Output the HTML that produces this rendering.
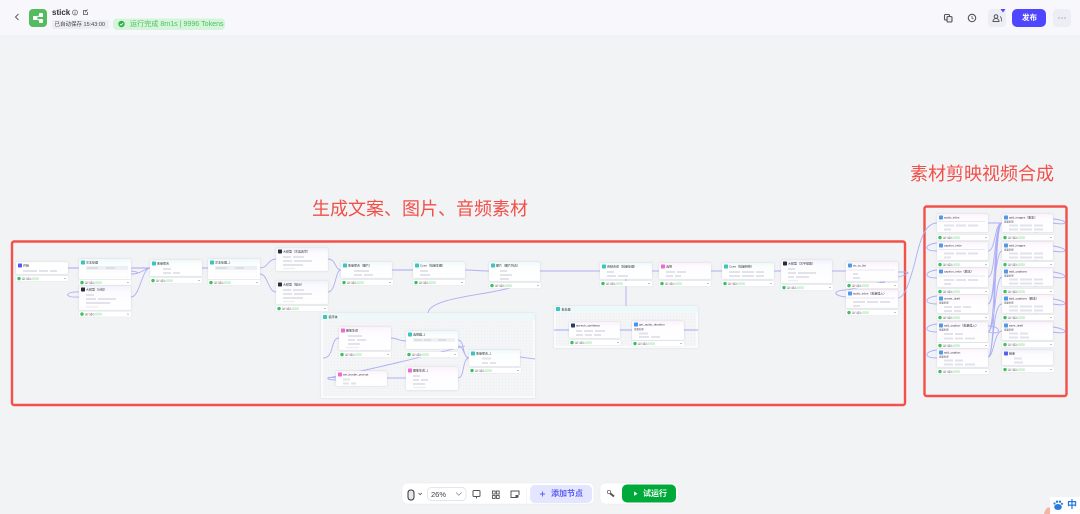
<!DOCTYPE html>
<html lang="zh"><head><meta charset="utf-8"><title>stick</title>
<style>
html,body{margin:0;padding:0;width:1080px;height:514px;overflow:hidden;background:#f2f3f5;font-family:"Liberation Sans","Noto Sans CJK SC",sans-serif}
svg{position:absolute;left:0;top:0}
.a{position:absolute;white-space:nowrap}
.lbl{color:#f14f49;font-size:18px;line-height:24px;font-family:"Liberation Sans","Noto Sans CJK SC",sans-serif;font-weight:400}
.n{stroke:#eceef2;stroke-width:.3;filter:drop-shadow(0 .5px 1px rgba(20,20,60,.13))}
.p{stroke:#e2e3ea;stroke-width:1.900;fill:none}
.e{stroke:#aeaef6;stroke-width:.9;fill:none}
.t{font-size:3px;fill:#333;font-family:"Liberation Sans","Noto Sans CJK SC",sans-serif}
.s{font-size:2.400px;fill:#555;font-family:"Liberation Sans","Noto Sans CJK SC",sans-serif}
</style></head><body>
<svg width="1080" height="514" viewBox="0 0 1080 514" xmlns="http://www.w3.org/2000/svg">
<defs>
<linearGradient id="gt" x1="0" y1="0" x2="0" y2="1"><stop offset="0" stop-color="#eefbfa"/><stop offset=".3" stop-color="#fcfefe"/><stop offset="1" stop-color="#fff"/></linearGradient>
<linearGradient id="gp" x1="0" y1="0" x2="0" y2="1"><stop offset="0" stop-color="#fdf3fb"/><stop offset=".3" stop-color="#fefcff"/><stop offset="1" stop-color="#fff"/></linearGradient>
<linearGradient id="gb" x1="0" y1="0" x2="0" y2="1"><stop offset="0" stop-color="#f3f3fe"/><stop offset=".3" stop-color="#fcfcff"/><stop offset="1" stop-color="#fff"/></linearGradient>
<linearGradient id="gg" x1="0" y1="0" x2="0" y2="1"><stop offset="0" stop-color="#ecf9f8"/><stop offset="1" stop-color="#f7fbfb"/></linearGradient>
<pattern id="dots" width="3" height="3" patternUnits="userSpaceOnUse"><rect width="3" height="3" fill="#f4f5f7"/><rect x="1" y="1" width=".6" height=".6" fill="#e4e5ea"/></pattern>
<g id="f"><rect width="52" height="5.200" rx=".8" fill="#fff" style="filter:drop-shadow(0 .3px .6px rgba(20,20,60,.12))"/><circle cx="3" cy="2.600" r="1.700" fill="#3cc25a"/><text x="6" y="3.600" class="s">运行成功</text><rect x="16" y="1.200" width="7" height="2.800" rx=".8" fill="#cff3d6"/><path d="M48 2.600h2" stroke="#999" stroke-width=".6"/></g>
</defs>

<!-- header -->
<rect width="1080" height="36" fill="#f8f8fc"/><rect y="35.500" width="1080" height="1" fill="#ebecf0"/>
<path d="M18.500 14 15.500 17 18.500 20" fill="none" stroke="#666" stroke-width="1.100"/>
<rect x="29" y="9" width="18" height="18" rx="4" fill="#55bb5f"/>
<path d="M35 18 41 15M35 18 41 21" stroke="#fff" stroke-width="1"/><rect x="33" y="16" width="4" height="4" rx=".8" fill="#fff"/><rect x="39" y="13" width="4" height="4" rx=".8" fill="#fff"/><rect x="39" y="19" width="4" height="4" rx=".8" fill="#fff"/>
<circle cx="75" cy="12.500" r="2.500" fill="none" stroke="#666" stroke-width=".7"/><path d="M75 11.500v3" stroke="#666" stroke-width=".7"/>
<path d="M87 10.500h-3.500v4h4v-2.500" fill="none" stroke="#555" stroke-width=".8"/><path d="M85 12.500l2.500-3" stroke="#555" stroke-width=".7"/>
<rect x="52" y="20" width="57" height="9" rx="2" fill="#ecedf5"/>
<rect x="113" y="18.500" width="112" height="11.500" rx="4" fill="#d5f5db"/>
<circle cx="121.500" cy="24" r="3.200" fill="#2fb24c"/><path d="M120 24l1.200 1.200 2-2.200" fill="none" stroke="#fff" stroke-width=".8"/>
<rect x="944.500" y="14.500" width="5" height="5.500" rx="1" fill="none" stroke="#555" stroke-width="1.100"/><rect x="947" y="16.500" width="5" height="5.500" rx="1" fill="#e8e8ec" stroke="#555" stroke-width="1.100"/>
<circle cx="972" cy="18" r="3.700" fill="none" stroke="#555" stroke-width="1.100"/><path d="M972 16v2.200l1.500 .8" fill="none" stroke="#555" stroke-width=".8"/>
<rect x="988" y="9" width="18" height="18" rx="4" fill="#ecedf5"/>
<circle cx="996" cy="16.500" r="1.800" fill="none" stroke="#555" stroke-width="1"/><path d="M993 21.500c0-4 6-4 6 0z" fill="none" stroke="#555" stroke-width="1"/><path d="M1000 16.500c1.500 1 1.500 2.500 1.500 5" fill="none" stroke="#555" stroke-width=".8"/>
<path d="M1000.500 9h5l-2.500 3.500z" fill="#4f46ff"/>
<rect x="1012" y="9" width="34" height="18" rx="5" fill="#4f46ff"/>
<rect x="1053" y="9" width="18" height="18" rx="4" fill="#ecedf5"/>
<path d="M1058.500 18h1M1061.500 18h1M1064.500 18h1" stroke="#777" stroke-width="1"/>

<!-- frames -->
<rect x="12" y="241.500" width="893" height="163.500" rx="2" fill="none" stroke="#f4504a" stroke-width="2.400"/>
<rect x="924.500" y="206.500" width="142" height="189.500" rx="2" fill="none" stroke="#f4504a" stroke-width="2.400"/>

<!-- groups -->
<rect x="321" y="313" width="214" height="85" rx="1.500" fill="url(#gg)" style="filter:drop-shadow(0 .5px 1px rgba(20,20,60,.1))"/><rect x="321" y="320" width="214" height="78" rx="1" fill="#fbfbfc"/><rect x="323" y="320" width="210" height="76" fill="url(#dots)"/>
<rect x="323" y="315" width="4" height="4" rx=".7" fill="#3dc4c0"/><text x="328.500" y="318" class="t">循环体</text>
<rect x="554" y="306" width="144" height="42" rx="1.500" fill="url(#gg)" style="filter:drop-shadow(0 .5px 1px rgba(20,20,60,.1))"/><rect x="554" y="313" width="144" height="35" rx="1" fill="#fbfbfc"/><rect x="556" y="313" width="140" height="33" fill="url(#dots)"/>
<rect x="556" y="307" width="4" height="4" rx=".7" fill="#3dc4c0"/><text x="561.500" y="310.500" class="t">批处理</text>

<!-- edges -->
<path class="e" d="M68 268H79M131 268H150M131 274C140 274 140 272 131 271M131 274C142 274 145 268 150 268M131 297C140 297 142 268 150 268M79 297C62 298 66 291 79 292M202 268H208M260 268C268 268 268 259 276 259M260 274C268 274 268 292 276 292M328 259C336 259 335 270 341 270M328 292C336 292 335 270 341 270M392 270H413M465 270C476 270 478 271 489 271M540 271H600M510 288C480 296 430 298 428 313M626 279V306M652 271H659M711 271H722M774 271H781M832 271H846"/>
<path class="e" d="M898 272H905C912 272 908 276 880 281M846 297C830 295 835 290 846 290C860 288 875 283 885 282M898 298C905 298 910 280 915 262C920 240 925 223 937 223"/>
<path class="e" d="M323 358C335 358 330 338 339 338M391 338C398 338 398 341 406 341M458 340C465 340 462 358 469 358M458 346C464 346 464 358 469 358M458 378C465 378 462 358 469 358M387 378H406M520 357C526 358 528 358 535 359M336 378C325 376 325 380 336 380M328 378C360 372 430 355 465 346M554 330H569M620 330H632M684 330H698"/>
<path class="e" d="M988 223H1002M988 251C996 251 994 223 1002 223M988 277C996 277 994 223 1002 223M988 304C996 304 994 223 1002 223M988 332C996 332 994 223 1002 223M988 357C996 357 994 223 1002 223M1002 251C995 251 995 304 988 304M1002 277C995 277 995 332 988 332M1002 304C992 304 994 357 988 357M1002 331C994 331 994 357 988 357"/>
<path class="e" d="M937 251C922 251 925 244 937 243M937 278C922 278 925 271 937 270M937 304C922 304 925 297 937 296M937 332C922 332 925 325 937 324M937 358C922 358 925 351 937 350M1053 223C1070 226 1068 220 1053 219M1053 251C1070 254 1068 248 1053 246M1053 277C1070 280 1068 274 1053 272M1053 304C1070 307 1068 301 1053 299M1053 332C1070 335 1068 329 1053 327M988 332C1002 336 1002 326 988 326M1053 228L1035 232M1053 256L1035 260M1053 282L1035 286M1053 309L1035 313"/>
<path d="M68 268h11M131 268h19M202 268h6M392 270h21M554 330h15M620 330h12M684 330h14" stroke="#a6a6f6" stroke-width="1" fill="none"/>

<!-- nodes -->
<g transform="translate(16,262)"><rect class="n" width="52" height="12" rx="1" fill="#fff"/><rect x="2" y="1.500" width="4" height="4" rx=".7" fill="#4f5cf0"/><text x="7" y="4.700" class="t">开始</text><path class="p" d="M7 9h14M23 9h9M34 9h7"/></g><use href="#f" x="16" y="276"/>
<g transform="translate(79,259)"><rect class="n" width="52" height="20.500" rx="1" fill="url(#gt)"/><rect x="2" y="1.500" width="4" height="4" rx=".7" fill="#3dc4c0"/><text x="7" y="4.700" class="t">文本处理</text><path d="M7 9h42" stroke="#eeeff3" stroke-width="4"/><path class="p" d="M8 9h11M27 9h9" style="stroke:#dcdde5"/><rect x="7" y="13" width="42" height="5" fill="#fff" stroke="#ebecf0" stroke-width=".3"/></g><use href="#f" x="79" y="280"/>
<g transform="translate(79,286)"><rect class="n" width="52" height="24" rx="1" fill="url(#gb)"/><rect x="2" y="1.500" width="4" height="4" rx=".7" fill="#2b2b33"/><text x="7" y="4.700" class="t">大模型（分镜）</text><path class="p" d="M7 9h8M7 13h10M19 13h18M7 17h24"/><path d="M7 21h12" stroke="#eeeef2" stroke-width="1.600"/></g><use href="#f" x="79" y="311.500"/>
<g transform="translate(150,260)"><rect class="n" width="52" height="16" rx="1" fill="url(#gt)"/><rect x="2" y="1.500" width="4" height="4" rx=".7" fill="#3dc4c0"/><text x="7" y="4.700" class="t">变量聚合</text><path class="p" d="M13 9h8M13 13h8M23 13h7"/></g><use href="#f" x="150" y="278"/>
<g transform="translate(208,259)"><rect class="n" width="52" height="20.500" rx="1" fill="url(#gt)"/><rect x="2" y="1.500" width="4" height="4" rx=".7" fill="#3dc4c0"/><text x="7" y="4.700" class="t">文本处理_1</text><path d="M7 9h42" stroke="#eeeff3" stroke-width="4"/><path class="p" d="M8 9h11M27 9h9" style="stroke:#dcdde5"/><rect x="7" y="13" width="42" height="5" fill="#fff" stroke="#ebecf0" stroke-width=".3"/></g><use href="#f" x="208" y="280"/>
<g transform="translate(276,248)"><rect class="n" width="52" height="23" rx="1" fill="url(#gb)"/><rect x="2" y="1.500" width="4" height="4" rx=".7" fill="#2b2b33"/><text x="7" y="4.700" class="t">大模型（文案改写）</text><path class="p" d="M7 9h8M17 9h11M7 13h9M18 13h18M7 17h20"/><path d="M7 20.500h12" stroke="#eeeef2" stroke-width="1.400"/></g>
<g transform="translate(276,281)"><rect class="n" width="52" height="23" rx="1" fill="url(#gb)"/><rect x="2" y="1.500" width="4" height="4" rx=".7" fill="#2b2b33"/><text x="7" y="4.700" class="t">大模型（提示）</text><path class="p" d="M7 9h8M17 9h11M7 13h9M18 13h18M7 17h20"/><path d="M7 20.500h12" stroke="#eeeef2" stroke-width="1.400"/></g><use href="#f" x="276" y="306"/>
<g transform="translate(341,262)"><rect class="n" width="51" height="16" rx="1" fill="url(#gt)"/><rect x="2" y="1.500" width="4" height="4" rx=".7" fill="#3dc4c0"/><text x="7" y="4.700" class="t">变量聚合（图片）</text><path class="p" d="M13 9h15M13 13h8M23 13h9"/></g><use href="#f" x="341" y="280"/>
<g transform="translate(413,262)"><rect class="n" width="52" height="16" rx="1" fill="url(#gt)"/><rect x="2" y="1.500" width="4" height="4" rx=".7" fill="#3dc4c0"/><text x="7" y="4.700" class="t">Coze（批量生图）</text><path class="p" d="M7 9h8M7 13h10"/></g><use href="#f" x="413" y="280"/>
<g transform="translate(489,262)"><rect class="n" width="51" height="19" rx="1" fill="url(#gt)"/><rect x="2" y="1.500" width="4" height="4" rx=".7" fill="#3dc4c0"/><text x="7" y="4.700" class="t">图片（图片列表）</text><path class="p" d="M11 9h7M11 13h12M11 17h9"/></g><use href="#f" x="489" y="283"/>
<g transform="translate(600,263)"><rect class="n" width="52" height="16" rx="1" fill="url(#gt)"/><rect x="2" y="1.500" width="4" height="4" rx=".7" fill="#3dc4c0"/><text x="7" y="4.700" class="t">音频合成（批量处理）</text><path class="p" d="M7 9h7M7 13h9M18 13h10"/></g><use href="#f" x="600" y="281"/>
<g transform="translate(659,263)"><rect class="n" width="52" height="16" rx="1" fill="url(#gp)"/><rect x="2" y="1.500" width="4" height="4" rx=".7" fill="#f06ad0"/><text x="7" y="4.700" class="t">选择</text><path class="p" d="M7 9h9M18 9h9M7 13h7M16 13h6"/></g><use href="#f" x="659" y="281"/>
<g transform="translate(722,263)"><rect class="n" width="52" height="16" rx="1" fill="url(#gt)"/><rect x="2" y="1.500" width="4" height="4" rx=".7" fill="#3dc4c0"/><text x="7" y="4.700" class="t">Coze（批量转换）</text><path class="p" d="M7 9h11M20 9h12M34 9h8M7 13h11M20 13h12M34 13h8"/></g><use href="#f" x="722" y="281"/>
<g transform="translate(781,260)"><rect class="n" width="51" height="23" rx="1" fill="url(#gb)"/><rect x="2" y="1.500" width="4" height="4" rx=".7" fill="#2b2b33"/><text x="7" y="4.700" class="t">大模型（文字提取）</text><path class="p" d="M7 9h7M7 13h8M17 13h18M7 17h6M15 17h13"/><path d="M7 20.500h10" stroke="#eeeef2" stroke-width="1.400"/></g><use href="#f" x="781" y="285"/>
<g transform="translate(846,262)"><rect class="n" width="52" height="19" rx="1" fill="url(#gp)"/><rect x="2" y="1.500" width="4" height="4" rx=".7" fill="#4f9ae8"/><text x="7" y="4.700" class="t">str_to_list</text><path d="M1 8h48" stroke="#e8e8ee" stroke-width="1"/><path class="p" d="M7 12h5M7 16h7"/></g><use href="#f" x="846" y="283"/>
<g transform="translate(846,290)"><rect class="n" width="52" height="18" rx="1" fill="url(#gp)"/><rect x="2" y="1.500" width="4" height="4" rx=".7" fill="#4f9ae8"/><text x="7" y="4.700" class="t">audio_infos（批量插入）</text><path d="M1 8h48" stroke="#e8e8ee" stroke-width="1"/><path class="p" d="M7 12h12M21 12h11M34 12h10M7 16h7"/></g><use href="#f" x="846" y="310"/>

<!-- loop group -->
<g transform="translate(339,327)"><rect class="n" width="52" height="23" rx="1" fill="url(#gp)"/><rect x="2" y="1.500" width="4" height="4" rx=".7" fill="#f06ad0"/><text x="7" y="4.700" class="t">图像生成</text><path class="p" d="M9 9h14M9 13h7M18 13h9M9 17h12"/><path d="M7 20.500h13" stroke="#eeeef2" stroke-width="1.400"/></g><use href="#f" x="339" y="352"/>
<g transform="translate(406,331)"><rect class="n" width="52" height="18" rx="1" fill="url(#gt)"/><rect x="2" y="1.500" width="4" height="4" rx=".7" fill="#3dc4c0"/><text x="7" y="4.700" class="t">选择器_1</text><path d="M7 9h42" stroke="#eeeff3" stroke-width="3.500"/><path class="p" d="M8 9h8M18 9h7M32 9h8" style="stroke:#dcdde5"/><rect x="7" y="12.500" width="42" height="3.500" fill="#fff"/></g><use href="#f" x="406" y="352"/>
<g transform="translate(469,350)"><rect class="n" width="51" height="16" rx="1" fill="url(#gt)"/><rect x="2" y="1.500" width="4" height="4" rx=".7" fill="#3dc4c0"/><text x="7" y="4.700" class="t">变量聚合_1</text><path class="p" d="M13 8.500h9M13 13h6M21 13h6"/></g><use href="#f" x="469" y="368"/>
<g transform="translate(336,371)"><rect class="n" width="51" height="15" rx="1" fill="url(#gp)"/><rect x="2" y="1.500" width="4" height="4" rx=".7" fill="#f06ad0"/><text x="7" y="4.700" class="t">set_border_prompt</text><path class="p" d="M7 8.500h7M7 12.500h6M15 12.500h5"/></g>
<g transform="translate(406,367)"><rect class="n" width="52" height="23" rx="1" fill="url(#gp)"/><rect x="2" y="1.500" width="4" height="4" rx=".7" fill="#f06ad0"/><text x="7" y="4.700" class="t">图像生成_1</text><path class="p" d="M7 9h7M7 13h6M15 13h7M7 17h12"/><path d="M7 20.500h13" stroke="#eeeef2" stroke-width="1.400"/></g>
<!-- audio group -->
<g transform="translate(569,322)"><rect class="n" width="51" height="16" rx="1" fill="url(#gp)"/><rect x="2" y="1.500" width="4" height="4" rx=".7" fill="#25405f"/><text x="7" y="4.700" class="t">speech_synthesis</text><path class="p" d="M7 9h6M15 9h9M26 9h10M7 13h7M16 13h7M25 13h7"/></g><use href="#f" x="569" y="340"/>
<g transform="translate(632,321)"><rect class="n" width="52" height="19" rx="1" fill="url(#gp)"/><rect x="2" y="1.500" width="4" height="4" rx=".7" fill="#3f96ee"/><text x="7" y="4.700" class="t">get_audio_duration</text><text x="2" y="9" class="s">批量处理</text><path class="p" d="M7 12.500h9M7 16h10M19 16h9"/></g><use href="#f" x="632" y="341"/>

<!-- right column -->
<g transform="translate(937,214)"><rect class="n" width="51" height="18" rx="1" fill="url(#gp)"/><rect x="2" y="1.500" width="4" height="4" rx=".7" fill="#4f9ae8"/><text x="7" y="4.700" class="t">audio_infos</text><path d="M1 7.500h47" stroke="#e8e8ee" stroke-width="1"/><path class="p" d="M7 11.500h10M19 11.500h10M31 11.500h10M7 15.500h7"/></g><use href="#f" x="937" y="235"/>
<g transform="translate(937,242)"><rect class="n" width="51" height="18" rx="1" fill="url(#gp)"/><rect x="2" y="1.500" width="4" height="4" rx=".7" fill="#4f9ae8"/><text x="7" y="4.700" class="t">caption_infos</text><path d="M1 7.500h47" stroke="#e8e8ee" stroke-width="1"/><path class="p" d="M7 11.500h10M19 11.500h10M31 11.500h10M7 15.500h7"/></g><use href="#f" x="937" y="262"/>
<g transform="translate(937,268)"><rect class="n" width="51" height="19" rx="1" fill="url(#gp)"/><rect x="2" y="1.500" width="4" height="4" rx=".7" fill="#4f9ae8"/><text x="7" y="4.700" class="t">caption_infos（副本）</text><path d="M1 8h47" stroke="#e8e8ee" stroke-width="1"/><path class="p" d="M7 12h10M19 12h10M31 12h10M7 16h7"/></g><use href="#f" x="937" y="289"/>
<g transform="translate(937,295)"><rect class="n" width="51" height="18" rx="1" fill="url(#gp)"/><rect x="2" y="1.500" width="4" height="4" rx=".7" fill="#4f9ae8"/><text x="7" y="4.700" class="t">create_draft</text><text x="2" y="8.500" class="s">批量处理</text><path class="p" d="M7 12h8M17 12h7M26 12h8M7 16h8M17 16h7"/></g><use href="#f" x="937" y="315"/>
<g transform="translate(937,322)"><rect class="n" width="51" height="20" rx="1" fill="url(#gp)"/><rect x="2" y="1.500" width="4" height="4" rx=".7" fill="#4f9ae8"/><text x="7" y="4.700" class="t">add_caption（批量插入）</text><text x="2" y="8.500" class="s">批量处理</text><path class="p" d="M7 12h9M18 12h8M7 16.500h9M18 16.500h8M28 16.500h10"/></g><use href="#f" x="937" y="343"/>
<g transform="translate(937,349)"><rect class="n" width="51" height="18" rx="1" fill="url(#gp)"/><rect x="2" y="1.500" width="4" height="4" rx=".7" fill="#4f9ae8"/><text x="7" y="4.700" class="t">add_caption</text><text x="2" y="8.500" class="s">批量处理</text><path class="p" d="M7 11.500h9M18 11.500h8M7 15.500h9M18 15.500h8M28 15.500h10"/></g><use href="#f" x="937" y="369"/>

<g transform="translate(1002,214)"><rect class="n" width="51" height="18" rx="1" fill="url(#gp)"/><rect x="2" y="1.500" width="4" height="4" rx=".7" fill="#4f9ae8"/><text x="7" y="4.700" class="t">add_images（副本）</text><text x="2" y="8.500" class="s">批量处理</text><path class="p" d="M7 11.500h9M18 11.500h12M32 11.500h9M7 15.500h9M18 15.500h12M32 15.500h9"/></g><use href="#f" x="1002" y="235"/>
<g transform="translate(1002,242)"><rect class="n" width="51" height="18" rx="1" fill="url(#gp)"/><rect x="2" y="1.500" width="4" height="4" rx=".7" fill="#4f9ae8"/><text x="7" y="4.700" class="t">add_images</text><text x="2" y="8.500" class="s">批量处理</text><path class="p" d="M7 11.500h9M18 11.500h12M32 11.500h9M7 15.500h9M18 15.500h12M32 15.500h9"/></g><use href="#f" x="1002" y="262"/>
<g transform="translate(1002,268)"><rect class="n" width="51" height="18" rx="1" fill="url(#gp)"/><rect x="2" y="1.500" width="4" height="4" rx=".7" fill="#4f9ae8"/><text x="7" y="4.700" class="t">add_captions</text><text x="2" y="8.500" class="s">批量处理</text><path class="p" d="M7 11.500h9M18 11.500h12M32 11.500h9M7 15.500h9M18 15.500h12M32 15.500h9"/></g><use href="#f" x="1002" y="289"/>
<g transform="translate(1002,295)"><rect class="n" width="51" height="18" rx="1" fill="url(#gp)"/><rect x="2" y="1.500" width="4" height="4" rx=".7" fill="#4f9ae8"/><text x="7" y="4.700" class="t">add_captions（副本）</text><text x="2" y="8.500" class="s">批量处理</text><path class="p" d="M7 11.500h9M18 11.500h12M32 11.500h9M7 15.500h9M18 15.500h12M32 15.500h9"/></g><use href="#f" x="1002" y="315"/>
<g transform="translate(1002,322)"><rect class="n" width="51" height="18" rx="1" fill="url(#gp)"/><rect x="2" y="1.500" width="4" height="4" rx=".7" fill="#4f9ae8"/><text x="7" y="4.700" class="t">save_draft</text><text x="2" y="8.500" class="s">批量处理</text><path class="p" d="M7 11.500h9M18 11.500h8M7 15.500h9M18 15.500h9"/></g><use href="#f" x="1002" y="342"/>
<g transform="translate(1002,350)"><rect class="n" width="51" height="15" rx="1" fill="url(#gb)"/><rect x="2" y="1.500" width="4" height="4" rx=".7" fill="#5a5ef0"/><text x="7" y="4.700" class="t">结束</text><path class="p" d="M12 8.500h8M12 12.500h9"/></g><use href="#f" x="1002" y="367"/>

<!-- toolbar -->
<rect x="402" y="483" width="192" height="21" rx="5" fill="#fff" stroke="#e8e9ee" stroke-width=".5"/>
<rect x="600" y="483" width="78" height="21" rx="5" fill="#fff" stroke="#e8e9ee" stroke-width=".5"/>
<rect x="408" y="490" width="6" height="10" rx="2.700" fill="#e8e8ea" stroke="#333" stroke-width="1"/>
<path d="M418.500 493l1.700 1.700 1.700-1.700" fill="none" stroke="#555" stroke-width=".8"/>
<rect x="427.500" y="487.500" width="38.500" height="13" rx="4" fill="#fff" stroke="#dcdde3" stroke-width=".7"/>
<path d="M456 492.500l2.800 2.800 2.800-2.800" fill="none" stroke="#888" stroke-width=".7"/>
<rect x="473" y="490.500" width="7" height="6" rx="1" fill="none" stroke="#555" stroke-width="1"/><path d="M476.500 496.500v2" stroke="#555" stroke-width="1"/>
<rect x="492.500" y="491" width="2.700" height="3" fill="none" stroke="#555" stroke-width=".9"/><rect x="496.500" y="491" width="2.700" height="3" fill="none" stroke="#555" stroke-width=".9"/><rect x="492.500" y="495.500" width="2.700" height="3" fill="none" stroke="#555" stroke-width=".9"/><rect x="496.500" y="495.500" width="2.700" height="3" fill="none" stroke="#555" stroke-width=".9"/>
<path d="M517.500 497.500h-6.500v-6.500h8v4" fill="none" stroke="#555" stroke-width="1"/><rect x="515.500" y="495" width="3" height="2.500" fill="#555"/>
<path d="M526.500 488v15" stroke="#ececf0" stroke-width=".6"/>
<rect x="530" y="485" width="62" height="18" rx="5" fill="#e4e5ff"/>
<path d="M542.500 491.500v5M540 494h5" stroke="#5a5ef0" stroke-width=".9"/>
<path d="M608 491.500l6 5" stroke="#555" stroke-width="2"/><circle cx="609" cy="492" r="1.700" fill="#fff" stroke="#555" stroke-width=".7"/>
<rect x="622" y="484.500" width="54" height="18" rx="5" fill="#00aa3a"/>
<path d="M634 491.500l3.500 2.200-3.500 2.200z" fill="#fff"/>

<!-- baidu ime -->
<path d="M1044 514c1-5 4-8 6-6v6z" fill="#f3b5a5"/>
<rect x="1050" y="497" width="30" height="17" fill="#fff"/>
<ellipse cx="1058" cy="507" rx="3.800" ry="3" fill="#2a7ae2"/><circle cx="1054.500" cy="503.500" r="1.100" fill="#2a7ae2"/><circle cx="1057" cy="501.700" r="1.200" fill="#2a7ae2"/><circle cx="1060" cy="501.700" r="1.200" fill="#2a7ae2"/><circle cx="1062" cy="503.800" r="1.100" fill="#2a7ae2"/>
</svg>

<div class="a" style="left:52px;top:7px;font-size:8px;line-height:11px;font-weight:700;color:#333">stick</div>
<div class="a" style="left:54.500px;top:20.500px;font-size:5.500px;line-height:8px;color:#444">已自动保存 15:43:00</div>
<div class="a" style="left:130px;top:20px;font-size:7.100px;line-height:9px;color:#4fc060">运行完成 8m1s | 9996 Tokens</div>
<div class="a" style="left:1022px;top:13px;font-size:7.500px;line-height:10px;font-weight:700;color:#fff">发布</div>
<div class="a lbl" style="left:312px;top:197px">生成文案、图片、音频素材</div>
<div class="a lbl" style="left:910px;top:162px">素材剪映视频合成</div>
<div class="a" style="left:431px;top:489.500px;font-size:7.500px;line-height:10px;color:#444">26%</div>
<div class="a" style="left:551px;top:489px;font-size:8px;line-height:10px;font-weight:700;color:#5a5ef0">添加节点</div>
<div class="a" style="left:643px;top:488.500px;font-size:8px;line-height:10px;font-weight:700;color:#fff">试运行</div>
<div class="a" style="left:1067px;top:500px;font-size:10px;line-height:12px;font-weight:700;color:#2a7ae2">中</div>
</body></html>
